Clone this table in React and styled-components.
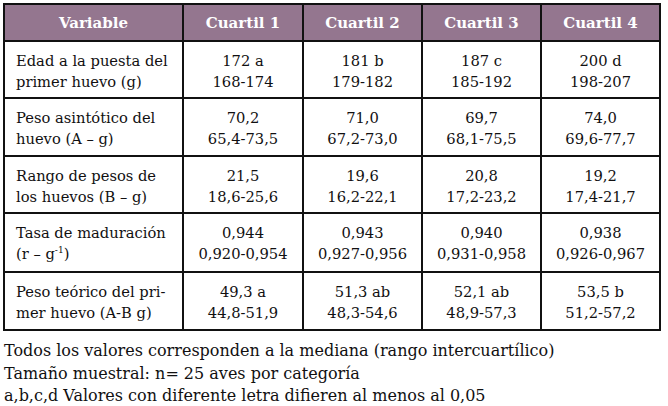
import React from "react";
import styled, { createGlobalStyle } from "styled-components";

const Global = createGlobalStyle`
  html, body { margin: 0; padding: 0; background: #ffffff; }
  body { font-family: "DejaVu Serif", "Liberation Serif", serif; color: #111011; }
`;

const Page = styled.div`
  width: 668px;
  height: 406px;
  padding: 3px 0 0 3px;
  box-sizing: border-box;
  display: flex;
  flex-direction: column;
`;

const Grid = styled.div`
  display: grid;
  grid-template-columns: 177px 118px 117px 117px 117px;
  grid-template-rows: 35px 55px 56px 55px 57px 56px;
  gap: 2px;
  padding: 2px;
  background: #111111;
  width: max-content;
`;

const HeadCell = styled.div`
  background: #94768f;
  color: #ffffff;
  font-weight: bold;
  font-size: 15px;
  display: flex;
  align-items: center;
  justify-content: center;
  padding-top: 1px;
  white-space: nowrap;
`;

const Cell = styled.div`
  background: #ffffff;
  font-size: 14.7px;
  line-height: 21px;
  padding-top: 8px;
  padding-left: ${(p) => (p.$label ? "11px" : "0")};
  text-align: ${(p) => (p.$label ? "left" : "center")};
  white-space: nowrap;
  overflow: visible;
`;

const Sup = styled.sup`
  font-size: 9px;
  line-height: 0;
  vertical-align: 6px;
`;

const Notes = styled.div`
  margin-top: 9px;
  padding-left: 1px;
  font-size: 16px;
  line-height: 22.5px;
  white-space: nowrap;
`;

const headers = ["Variable", "Cuartil 1", "Cuartil 2", "Cuartil 3", "Cuartil 4"];

const rows = [
  {
    label: ["Edad a la puesta del", "primer huevo (g)"],
    values: [
      ["172 a", "168-174"],
      ["181 b", "179-182"],
      ["187 c", "185-192"],
      ["200 d", "198-207"],
    ],
  },
  {
    label: ["Peso asintótico del", "huevo (A – g)"],
    values: [
      ["70,2", "65,4-73,5"],
      ["71,0", "67,2-73,0"],
      ["69,7", "68,1-75,5"],
      ["74,0", "69,6-77,7"],
    ],
  },
  {
    label: ["Rango de pesos de", "los huevos (B – g)"],
    values: [
      ["21,5", "18,6-25,6"],
      ["19,6", "16,2-22,1"],
      ["20,8", "17,2-23,2"],
      ["19,2", "17,4-21,7"],
    ],
  },
  {
    label: [
      "Tasa de maduración",
      <>
        (r – g<Sup>-1</Sup>)
      </>,
    ],
    values: [
      ["0,944", "0,920-0,954"],
      ["0,943", "0,927-0,956"],
      ["0,940", "0,931-0,958"],
      ["0,938", "0,926-0,967"],
    ],
  },
  {
    label: ["Peso teórico del pri-", "mer huevo (A-B g)"],
    values: [
      ["49,3 a", "44,8-51,9"],
      ["51,3 ab", "48,3-54,6"],
      ["52,1 ab", "48,9-57,3"],
      ["53,5 b", "51,2-57,2"],
    ],
  },
];

const TwoLines = ({ lines }) => (
  <>
    {lines[0]}
    <br />
    {lines[1]}
  </>
);

export default function App() {
  return (
    <>
      <Global />
      <Page>
        <Grid>
          {headers.map((h) => (
            <HeadCell key={h}>{h}</HeadCell>
          ))}
          {rows.map((r, i) => (
            <React.Fragment key={i}>
              <Cell $label>
                <TwoLines lines={r.label} />
              </Cell>
              {r.values.map((v, j) => (
                <Cell key={j}>
                  <TwoLines lines={v} />
                </Cell>
              ))}
            </React.Fragment>
          ))}
        </Grid>
        <Notes>
          Todos los valores corresponden a la mediana (rango intercuartílico)
          <br />
          Tamaño muestral: n= 25 aves por categoría
          <br />
          a,b,c,d Valores con diferente letra difieren al menos al 0,05
        </Notes>
      </Page>
    </>
  );
}
